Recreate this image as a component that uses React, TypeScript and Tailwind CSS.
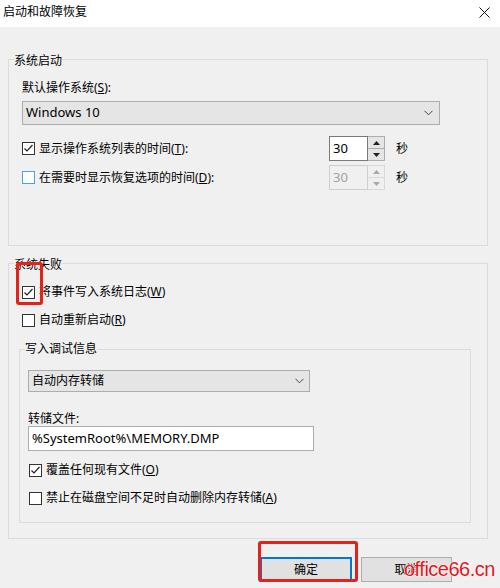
import React from 'react'

function Box({ checked = false, blue = false }: { checked?: boolean; blue?: boolean }) {
  return (
    <span
      className={
        blue
          ? 'flex h-[13px] w-[13px] shrink-0 items-center justify-center border border-[#4aa3e8] bg-white'
          : 'flex h-[13px] w-[13px] shrink-0 items-center justify-center border border-[#333] bg-white'
      }
    >
      {checked && (
        <svg width="11" height="11" viewBox="0 0 11 11">
          <polyline points="1.5,5.5 4,8 9.5,2" fill="none" stroke="#222" strokeWidth="1.2" />
        </svg>
      )}
    </span>
  )
}

function Check({ checked, blue, children }: { checked?: boolean; blue?: boolean; children: React.ReactNode }) {
  return (
    <div className="flex h-[16px] items-center gap-[4px] leading-[16px]">
      <Box checked={checked} blue={blue} />
      <span>{children}</span>
    </div>
  )
}

function Arrow({ up, dim }: { up?: boolean; dim?: boolean }) {
  return (
    <svg width="7" height="4" viewBox="0 0 7 4">
      <polygon points={up ? '0,4 3.5,0 7,4' : '0,0 7,0 3.5,4'} fill={dim ? '#a8a8a8' : '#222'} />
    </svg>
  )
}

function Spinner({ disabled = false }: { disabled?: boolean }) {
  return (
    <div className="flex h-[25px]">
      <div
        className={
          disabled
            ? 'flex w-[39px] items-center border border-[#cfcfcf] bg-[#f0f0f0] pl-[3px] text-[13px] text-[#a0a0a0]'
            : 'flex w-[39px] items-center border border-[#7a7a7a] bg-white pl-[3px] text-[13px]'
        }
      >
        30
      </div>
      <div className="flex w-[17px] flex-col">
        <div
          className={
            disabled
              ? 'flex flex-1 items-center justify-center border border-l-0 border-[#d9d9d9] bg-[#f0f0f0]'
              : 'flex flex-1 items-center justify-center border border-l-0 border-[#adadad] bg-[#e5e5e5]'
          }
        >
          <Arrow up dim={disabled} />
        </div>
        <div
          className={
            disabled
              ? 'flex flex-1 items-center justify-center border border-l-0 border-t-0 border-[#d9d9d9] bg-[#f0f0f0]'
              : 'flex flex-1 items-center justify-center border border-l-0 border-t-0 border-[#adadad] bg-[#e5e5e5]'
          }
        >
          <Arrow dim={disabled} />
        </div>
      </div>
    </div>
  )
}

function Chevron() {
  return (
    <svg width="9" height="6" viewBox="0 0 9 6">
      <polyline points="0.5,0.8 4.5,4.8 8.5,0.8" fill="none" stroke="#444" strokeWidth="1" />
    </svg>
  )
}

export default function App() {
  return (
    <div className="relative h-[588px] w-[500px] overflow-hidden bg-[#f0f0f0] text-[12px] text-black font-['Noto_Sans','Noto_Sans_CJK_SC',sans-serif]">
      {/* TITLE BAR */}
      <div className="flex h-[27px] justify-between bg-white pl-[3px] pr-[10px]">
        <span className="pt-[4px] leading-[16px]">启动和故障恢复</span>
        <svg className="mt-[7px]" width="11" height="11" viewBox="0 0 11 11">
          <path d="M0.5 0.5L10.5 10.5M10.5 0.5L0.5 10.5" stroke="#111" strokeWidth="1" />
        </svg>
      </div>

      <div className="px-[8px] pt-[22px]">
        {/* SYSTEM STARTUP */}
        <fieldset className="w-[480px] border border-[#dcdcdc] pb-[55px]">
          <legend className="ml-[5px] pt-[4px] leading-[16px]">系统启动</legend>
          <div className="px-[13px] pt-[11px]">
            <div className="leading-[16px]">
              默认操作系统(<u>S</u>):
            </div>
            <div className="mt-[5px] flex h-[24px] w-[418px] items-center justify-between border border-[#adadad] bg-[#e5e5e5] pl-[3px] pr-[6px]">
              <span className="text-[13px]">Windows 10</span>
              <Chevron />
            </div>

            <div className="mt-[11px] flex items-center">
              <div className="w-[307px]">
                <Check checked>
                  显示操作系统列表的时间(<u>T</u>):
                </Check>
              </div>
              <Spinner />
              <span className="ml-[11px]">秒</span>
            </div>
            <div className="mt-[4px] flex items-center">
              <div className="w-[307px]">
                <Check blue>
                  在需要时显示恢复选项的时间(<u>D</u>):
                </Check>
              </div>
              <Spinner disabled />
              <span className="ml-[11px]">秒</span>
            </div>
          </div>
        </fieldset>

        {/* SYSTEM FAILURE */}
        <fieldset className="mt-[7px] w-[480px] border border-[#dcdcdc] pb-[15px]">
          <legend className="ml-[5px] pt-[4px] leading-[16px]">系统失败</legend>
          <div className="px-[10px] pt-[11px]">
            <div className="pl-[3px]">
              <Check checked>
                将事件写入系统日志(<u>W</u>)
              </Check>
            </div>
            <div className="mt-[12px] pl-[3px]">
              <Check>
                自动重新启动(<u>R</u>)
              </Check>
            </div>

            <fieldset className="mt-[13px] w-[452px] border border-[#dcdcdc] pb-[16px]">
              <legend className="ml-[5px] leading-[16px]">写入调试信息</legend>
              <div className="px-[8px] pt-[13px]">
                <div className="flex h-[22px] w-[282px] items-center justify-between border border-[#adadad] bg-[#e5e5e5] pl-[3px] pr-[5px]">
                  <span>自动内存转储</span>
                  <Chevron />
                </div>
                <div className="mt-[20px] leading-[14px]">转储文件:</div>
                <div className="flex h-[25px] w-[286px] items-center border border-[#adadad] bg-white pl-[3px] text-[13px]">
                  %SystemRoot%\MEMORY.DMP
                </div>
                <div className="mt-[11px] pl-[1px]">
                  <Check checked>
                    覆盖任何现有文件(<u>O</u>)
                  </Check>
                </div>
                <div className="mt-[12px] pl-[1px]">
                  <Check>
                    禁止在磁盘空间不足时自动删除内存转储(<u>A</u>)
                  </Check>
                </div>
              </div>
            </fieldset>
          </div>
        </fieldset>

        {/* BUTTONS */}
        <div className="mt-[18px] flex justify-end gap-[9px] pr-[40px]">
          <button className="h-[25px] w-[92px] border-2 border-[#0078d7] bg-[#e1e1e1]">确定</button>
          <button className="h-[25px] w-[91px] border border-[#adadad] bg-[#e1e1e1]">取消</button>
        </div>
      </div>

      {/* annotations */}
      <div className="absolute left-[16px] top-[262px] h-[43px] w-[27px] rounded-[3px] border-[3px] border-[#e6211a]" />
      <div className="absolute left-[258px] top-[541px] h-[41px] w-[100px] rounded-[3px] border-[3px] border-[#e6211a]" />
      <div className="absolute left-[404px] top-[557px] bg-[#f0f0f0]/0 text-[20px] leading-[24px] tracking-[-0.5px] text-[#e8141b] font-['Liberation_Sans',sans-serif] [text-shadow:0_0_2px_#fff,0_0_2px_#fff,0_0_1px_#fff]">
        office66.cn
      </div>
    </div>
  )
}
